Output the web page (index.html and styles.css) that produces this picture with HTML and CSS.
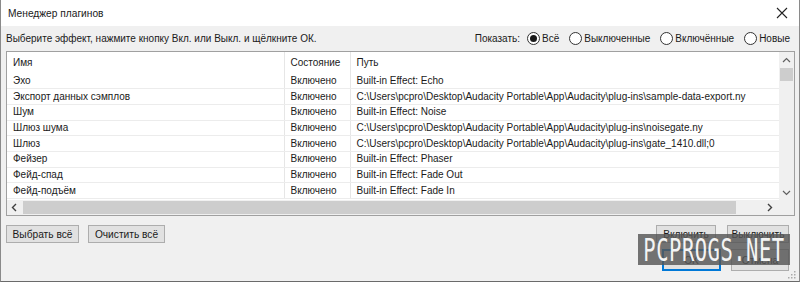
FILE: index.html
```html
<!DOCTYPE html>
<html lang="ru">
<head>
  <meta charset="UTF-8">
  <meta name="viewport" content="width=device-width, initial-scale=1.0">
  <title>Менеджер плагинов</title>
  <link rel="stylesheet" href="styles.css">
</head>
<body>
  <div class="window">
    <!-- Title bar -->
    <div class="titlebar">
      <span class="title">Менеджер плагинов</span>
      <svg class="close" width="12" height="12" viewBox="0 0 12 12">
        <path d="M1 1 L11 11 M11 1 L1 11" stroke="#222" stroke-width="1.1" fill="none"/>
      </svg>
    </div>

    <!-- Hint and filter -->
    <div class="toolbar">
      <span class="hint">Выберите эффект, нажмите кнопку Вкл. или Выкл. и щёлкните ОК.</span>
      <div class="filter">
        <span class="filter-label">Показать:</span>
        <label class="radio"><span class="dot checked"></span>Всё</label>
        <label class="radio"><span class="dot"></span>Выключенные</label>
        <label class="radio"><span class="dot"></span>Включённые</label>
        <label class="radio"><span class="dot"></span>Новые</label>
      </div>
    </div>

    <!-- Plugin list -->
    <div class="list">
      <div class="list-body">
        <table class="plugins">
          <colgroup>
            <col class="col-name">
            <col class="col-state">
            <col class="col-path">
          </colgroup>
          <thead>
            <tr>
              <th>Имя</th>
              <th>Состояние</th>
              <th>Путь</th>
            </tr>
          </thead>
          <tbody>
            <tr><td>Эхо</td><td>Включено</td><td>Built-in Effect: Echo</td></tr>
            <tr><td>Экспорт данных сэмплов</td><td>Включено</td><td>C:\Users\pcpro\Desktop\Audacity Portable\App\Audacity\plug-ins\sample-data-export.ny</td></tr>
            <tr><td>Шум</td><td>Включено</td><td>Built-in Effect: Noise</td></tr>
            <tr><td>Шлюз шума</td><td>Включено</td><td>C:\Users\pcpro\Desktop\Audacity Portable\App\Audacity\plug-ins\noisegate.ny</td></tr>
            <tr><td>Шлюз</td><td>Включено</td><td>C:\Users\pcpro\Desktop\Audacity Portable\App\Audacity\plug-ins\gate_1410.dll;0</td></tr>
            <tr><td>Фейзер</td><td>Включено</td><td>Built-in Effect: Phaser</td></tr>
            <tr><td>Фейд-спад</td><td>Включено</td><td>Built-in Effect: Fade Out</td></tr>
            <tr><td>Фейд-подъём</td><td>Включено</td><td>Built-in Effect: Fade In</td></tr>
          </tbody>
        </table>
      </div>
      <div class="vscroll">
        <svg class="arrow" width="9" height="6" viewBox="0 0 9 6"><path d="M1 5 L4.5 1.5 L8 5" stroke="#606060" stroke-width="1.2" fill="none"/></svg>
        <div class="vthumb"></div>
        <div class="spacer"></div>
        <svg class="arrow" width="9" height="6" viewBox="0 0 9 6"><path d="M1 1 L4.5 4.5 L8 1" stroke="#606060" stroke-width="1.2" fill="none"/></svg>
      </div>
      <div class="hscroll">
        <svg class="arrow" width="6" height="9" viewBox="0 0 6 9"><path d="M5 1 L1.5 4.5 L5 8" stroke="#404040" stroke-width="1.4" fill="none"/></svg>
        <div class="hthumb"></div>
        <svg class="arrow" width="6" height="9" viewBox="0 0 6 9"><path d="M1 1 L4.5 4.5 L1 8" stroke="#404040" stroke-width="1.4" fill="none"/></svg>
      </div>
      <div class="corner"></div>
    </div>

    <!-- Buttons -->
    <div class="footer">
      <div class="left-buttons">
        <button class="btn btn-select">Выбрать всё</button>
        <button class="btn btn-clear">Очистить всё</button>
      </div>
      <div class="right-buttons">
        <button class="btn btn-on">Включить</button>
        <button class="btn btn-off">Выключить</button>
        <button class="btn btn-ok">OK</button>
        <button class="btn btn-cancel">Отмена</button>
      </div>
    </div>

    <svg class="grip" width="8" height="8" viewBox="0 0 8 8">
      <rect x="6" y="0" width="1.5" height="1.5" fill="#aaa"/>
      <rect x="3" y="3" width="1.5" height="1.5" fill="#aaa"/>
      <rect x="6" y="3" width="1.5" height="1.5" fill="#aaa"/>
      <rect x="0" y="6" width="1.5" height="1.5" fill="#aaa"/>
      <rect x="3" y="6" width="1.5" height="1.5" fill="#aaa"/>
      <rect x="6" y="6" width="1.5" height="1.5" fill="#aaa"/>
    </svg>

    <div class="watermark"><span>PCPROGS.NET</span></div>
  </div>
</body>
</html>
```

FILE: styles.css
```css
* {
  box-sizing: border-box;
}

body {
  margin: 0;
  font-family: "Liberation Sans", Arial, sans-serif;
  font-size: 10px;
  color: #1a1a1a;
  background: #f0f0f0;
}

.window {
  position: relative;
  width: 800px;
  height: 282px;
  display: flex;
  flex-direction: column;
  background: #f0f0f0;
  border-left: 1px solid #8a8a8a;
  border-right: 1px solid #8a8a8a;
  border-bottom: 1px solid #6a6a6a;
  overflow: hidden;
}

.titlebar {
  height: 26px;
  background: #ffffff;
  display: flex;
  align-items: center;
  justify-content: space-between;
  padding: 0 11px 0 7px;
  font-size: 10.2px;
}

.toolbar {
  height: 25px;
  display: flex;
  align-items: center;
  justify-content: space-between;
  padding: 0 9px 0 5px;
}

.filter {
  display: flex;
  align-items: center;
}

.filter-label {
  margin-right: 7px;
}

.radio {
  display: flex;
  align-items: center;
  margin-left: 10px;
}

.filter-label + .radio {
  margin-left: 0;
}

.dot {
  width: 13px;
  height: 13px;
  border: 1px solid #333;
  border-radius: 50%;
  margin-right: 2px;
  display: flex;
  align-items: center;
  justify-content: center;
  background: #fff;
}

.dot.checked::after {
  content: "";
  width: 7px;
  height: 7px;
  border-radius: 50%;
  background: #1a1a1a;
}

.list {
  margin: 0 4px 0 5px;
  height: 165px;
  border: 1px solid #a0a0a0;
  background: #fff;
  display: grid;
  grid-template-columns: 1fr 15px;
  grid-template-rows: 1fr 15px;
  min-width: 0;
}

.list-body {
  overflow: hidden;
  min-width: 0;
}

.plugins {
  border-collapse: collapse;
  table-layout: fixed;
  width: 1043px;
  white-space: nowrap;
}

.col-name {
  width: 277px;
}

.col-state {
  width: 66px;
}

.col-path {
  width: 700px;
}

.plugins th,
.plugins td {
  text-align: left;
  font-weight: normal;
  padding: 0 6px;
  overflow: hidden;
  border-right: 1px solid #e6e6e6;
}

.plugins th {
  height: 21px;
}

.plugins td {
  height: 15.7px;
  line-height: 14px;
  border-bottom: 1px solid #ececec;
}

.vscroll {
  background: #f0f0f0;
  display: flex;
  flex-direction: column;
  align-items: center;
  padding: 5px 0 4px;
}

.vthumb {
  width: 13px;
  height: 13px;
  margin-top: 5px;
  background: #cdcdcd;
}

.spacer {
  flex: 1;
}

.hscroll {
  background: #f0f0f0;
  display: flex;
  align-items: center;
  padding: 0 6px 0 4px;
}

.hthumb {
  flex: 1;
  height: 13px;
  margin: 0 31px 0 6px;
  background: #cdcdcd;
}

.corner {
  background: #f0f0f0;
}

.footer {
  flex: 1;
  display: flex;
  justify-content: space-between;
  padding: 9px 10px 0 5px;
}

.left-buttons {
  display: flex;
  gap: 9px;
  align-items: flex-start;
}

.right-buttons {
  display: grid;
  grid-template-columns: 62px 62px;
  column-gap: 11px;
  row-gap: 6px;
  align-content: start;
}

.btn {
  font-family: inherit;
  font-size: 10.2px;
  color: #1a1a1a;
  background: #e1e1e1;
  border: 1px solid #adadad;
  height: 18px;
  padding: 0 2px;
  white-space: nowrap;
  border-radius: 0;
}

.btn-select {
  width: 73px;
}

.btn-clear {
  width: 77px;
}

.btn-on {
  width: 60px;
  margin-left: 2px;
}

.btn-off {
  width: 62px;
}

.btn-ok {
  height: 22px;
  width: 59px;
  margin-left: 8px;
  border: 2px solid #0078d7;
}

.btn-cancel {
  height: 22px;
  width: 58px;
  margin-left: 4px;
}

.grip {
  position: absolute;
  right: 3px;
  bottom: 2px;
}

.watermark {
  position: absolute;
  left: 637px;
  top: 234px;
  width: 152px;
  height: 31px;
  background: rgba(85, 85, 85, 0.82);
  display: flex;
  align-items: center;
  justify-content: center;
}

.watermark span {
  font-family: "DejaVu Sans Mono", monospace;
  font-size: 20.5px;
  color: #f4f4f4;
  letter-spacing: 0.5px;
  transform: scaleY(1.55);
}
```
